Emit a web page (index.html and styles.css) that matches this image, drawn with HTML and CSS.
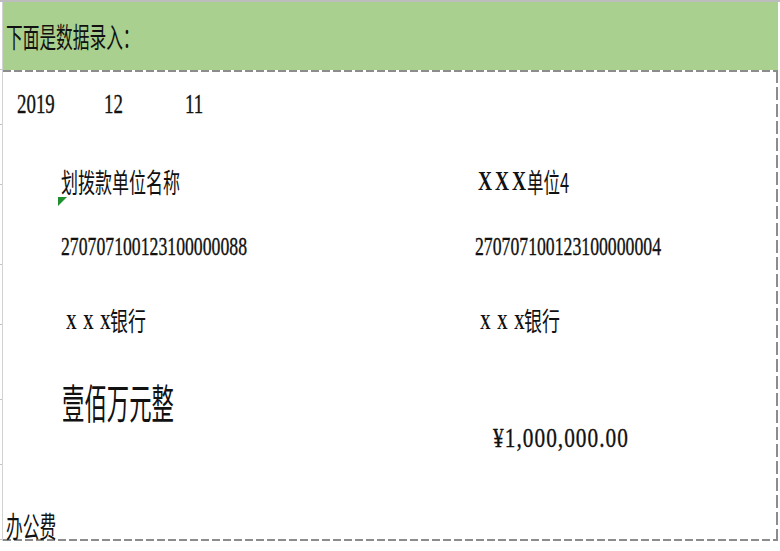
FILE: index.html
```html
<!DOCTYPE html>
<html lang="zh-CN">
<head>
<meta charset="utf-8">
<title>数据录入</title>
<link rel="stylesheet" href="styles.css">
</head>
<body>
<div class="topline"></div>
<div class="sheet">
  <div class="gutter">
    <i></i><i></i><i></i><i></i><i></i><i></i><i></i><i></i>
  </div>
  <div class="main">
    <div class="header"><span class="t cj hdr">下面是数据录入：</span></div>
    <div class="body">
      <div class="dates">
        <div><span class="t num date">2019</span></div>
        <div><span class="t num date">12</span></div>
        <div><span class="t num date">11</span></div>
      </div>
      <div class="row r-name">
        <div class="cell flagged"><span class="t cj name">划拨款单位名称</span><i class="flag"></i></div>
        <div class="cell"><span class="t xx xx-big">X X X</span><span class="t cj unit">单位4</span></div>
      </div>
      <div class="row r-acct">
        <div class="cell"><span class="t num acct">270707100123100000088</span></div>
        <div class="cell acct-r"><span class="t num acct">270707100123100000004</span></div>
      </div>
      <div class="row r-bank">
        <div class="cell bank-l"><span class="t xx xx-small">X X X</span><span class="t cj bank">银行</span></div>
        <div class="cell bank-r"><span class="t xx xx-small">X X X</span><span class="t cj bank">银行</span></div>
      </div>
      <div class="row r-amt">
        <div class="cell upper-cell"><span class="t cj upper">壹佰万元整</span></div>
        <div class="cell money-cell"><span class="t num money">¥1,000,000.00</span></div>
      </div>
      <div class="memo"><span class="t cj memo-t">办公费</span></div>
    </div>
  </div>
</div>
</body>
</html>
```
FILE: styles.css
```css
html, body {
  margin: 0;
  padding: 0;
  background: #ffffff;
}
body {
  width: 780px;
  height: 551px;
  overflow: hidden;
  color: #111;
  font-family: "Noto Sans CJK SC", sans-serif;
}
.topline {
  height: 2px;
  background: #bdbdbd;
}
.sheet {
  display: flex;
  width: 778px;
}
.gutter {
  width: 2px;
  display: grid;
  grid-template-rows: 68px 55px 60px 80px 60px 75px 65px 75px;
}
.gutter i {
  border-bottom: 1px solid #c4c4c4;
}
.main {
  flex: 1;
  border-left: 1px solid #d2d2d2;
}
.header {
  height: 68px;
  background: #a9d08e;
  box-sizing: border-box;
  padding: 20px 0 0 3px;
  line-height: 0;
}
.body {
  display: flow-root;
  height: 471px;
  box-sizing: border-box;
  line-height: 0;
  background:
    repeating-linear-gradient(90deg, #8c8c8c 0 8px, transparent 8px 11px) left top / 100% 2px no-repeat,
    repeating-linear-gradient(90deg, #8c8c8c 0 8px, transparent 8px 11px) left bottom / 100% 2px no-repeat,
    repeating-linear-gradient(180deg, #8c8c8c 0 13px, transparent 13px 17px) right top / 2px 100% no-repeat;
}

/* generic text pieces */
.t {
  display: inline-block;
  line-height: 1;
  white-space: pre;
  transform-origin: 0 50%;
}
.cj { font-family: "Noto Sans CJK SC", sans-serif; }
.num {
  font-family: "Liberation Serif", serif;
  -webkit-text-stroke: 0.35px #111;
}
.xx {
  font-family: "Liberation Serif", serif;
  font-weight: bold;
  vertical-align: 3px;
}

.hdr { font-size: 28px; transform: scaleX(0.596); }

.dates {
  display: grid;
  grid-template-columns: 87.5px 81px 1fr;
  padding-left: 13.5px;
  margin-top: 21px;
}
.date { font-size: 27px; transform: scaleX(0.70); }

.row {
  display: grid;
  grid-template-columns: 413px 1fr;
  padding-left: 58px;
}
.cell { white-space: nowrap; }
.flagged { position: relative; }
.flag {
  position: absolute;
  left: -3px;
  top: 29px;
  width: 9px;
  height: 9px;
  background: #1f8f2f;
  clip-path: polygon(0 0, 100% 0, 0 100%);
}

.r-name { margin-top: 50px; }
.name { font-size: 27px; transform: scaleX(0.63); }
.unit { font-size: 27px; transform: scaleX(0.61); }
.xx-big {
  font-size: 27px;
  word-spacing: -2.65px;
  transform: scaleX(0.72);
  margin-left: 4px;
  margin-right: -18.2px;
}

.r-acct { margin-top: 40px; }
.acct { font-size: 24.5px; transform: scaleX(0.723); }
.acct-r { padding-left: 1px; }

.r-bank { margin-top: 47.5px; }
.xx-small {
  font-size: 21px;
  word-spacing: 3.9px;
  transform: scaleX(0.7);
  margin-right: -19.8px;
  vertical-align: 2px;
}
.bank-l { padding-left: 5px; }
.bank-r { padding-left: 6px; }
.bank { font-size: 26px; transform: scaleX(0.69); }

.r-amt { margin-top: 48px; }
.upper-cell { padding-left: 1px; }
.upper { font-size: 41px; transform: scaleX(0.546); }
.money-cell { margin-top: 44.4px; padding-left: 19px; }
.money { font-size: 27px; letter-spacing: 1.3px; transform: scaleX(0.79); }

.memo { margin-top: 58.3px; padding-left: 3px; }
.memo-t { font-size: 29px; transform: scaleX(0.576); }
```
